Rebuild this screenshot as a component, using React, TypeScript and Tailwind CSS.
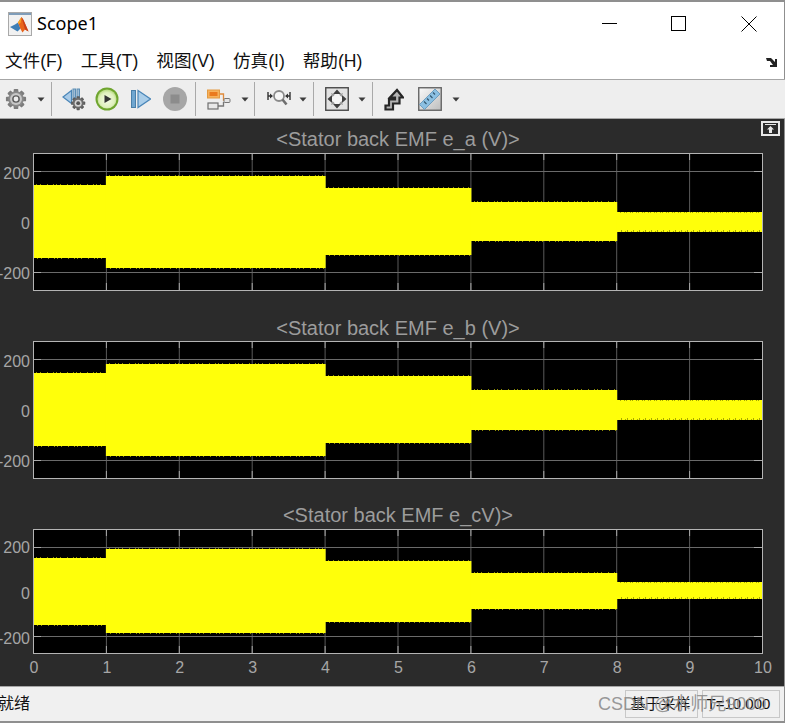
import React from "react";

const CJK = "font-['Liberation_Sans','Noto_Sans_CJK_SC',sans-serif]";

type Band = { from: number; to: number; top: number; bottom: number };

const WIDTH = 729;

// top and bottom of the yellow envelope are in px from the top of the axes
function Plot({ height, ticks, bands }: { height: number; ticks: number[]; bands: Band[] }) {
  const spikes: React.ReactElement[] = [];
  bands.forEach((b, i) => {
    const x0 = (b.from / 10) * WIDTH;
    const x1 = (b.to / 10) * WIDTH;
    const comb = b.from === 8;
    for (let x = Math.ceil(x0) + 3; x < x1 - 1; x += comb ? 2 + (x % 3) : 3 + ((x * 7 + i) % 5)) {
      const len = comb ? 1 + ((x * 5) % 3) : 1;
      const fill = comb ? "#a8a800" : "#8f8f00";
      spikes.push(<rect key={`t${i}-${x}`} x={x} y={b.top - (comb ? 0 : 1)} width="1" height="1" fill={fill} />);
      spikes.push(<rect key={`b${i}-${x}`} x={x + 1} y={b.bottom - (comb ? len : 0)} width="1" height={len} fill={fill} />);
    }
  });
  return (
    <svg width={WIDTH + 1} height={height + 1} className="block shrink-0">
      <rect x="0" y="0" width={WIDTH} height={height} fill="#000" />
      {[1, 2, 3, 4, 5, 6, 7, 8, 9].map((k) => (
        <g key={k}>
          <line x1={k * 72.9 + 0.5} x2={k * 72.9 + 0.5} y1="0" y2={height} stroke="#5a5a5a" />
          <line x1={k * 72.9 + 0.5} x2={k * 72.9 + 0.5} y1="0" y2="7" stroke="#a8a8a8" />
          <line x1={k * 72.9 + 0.5} x2={k * 72.9 + 0.5} y1={height - 7} y2={height} stroke="#a8a8a8" />
        </g>
      ))}
      {ticks.map((y) => (
        <g key={y}>
          <line x1="0" x2={WIDTH} y1={y + 0.5} y2={y + 0.5} stroke="#6a6a6a" />
          <line x1="0" x2="8" y1={y + 0.5} y2={y + 0.5} stroke="#a8a8a8" />
          <line x1={WIDTH - 8} x2={WIDTH} y1={y + 0.5} y2={y + 0.5} stroke="#a8a8a8" />
        </g>
      ))}
      {bands.map((b) => (
        <rect
          key={b.from}
          x={(b.from / 10) * WIDTH}
          y={b.top}
          width={((b.to - b.from) / 10) * WIDTH + 1}
          height={b.bottom - b.top}
          fill="#ffff0a"
        />
      ))}
      {spikes}
      <rect x="0.5" y="0.5" width={WIDTH} height={height} fill="none" stroke="#b4b4b4" />
    </svg>
  );
}

function YLabels({ gap, pad }: { gap: string; pad: string }) {
  return (
    <div className={`w-[33px] shrink-0 flex flex-col items-end pr-[3px] text-[16px] leading-[20px] text-[#a6a6a6] ${gap} ${pad}`}>
      <span>200</span>
      <span>0</span>
      <span className="whitespace-nowrap">-200</span>
    </div>
  );
}

function Caret() {
  return (
    <svg width="9" height="5" viewBox="0 0 9 5" className="shrink-0">
      <path d="M0.5 0.5h7l-3.5 4z" fill="#3c3c3c" />
    </svg>
  );
}

function Sep() {
  return <div className="w-px h-[34px] bg-[#a9a9a9] shrink-0" />;
}

const gearAngles = [0, 45, 90, 135, 180, 225, 270, 315];

function Gear() {
  return (
    <svg width="22" height="22" viewBox="0 0 24 24" className="shrink-0 blur-[0.3px]">
      {gearAngles.map((a) => (
        <rect key={a} x="9.5" y="1" width="5" height="5" rx="1" fill="#7c7c7c" transform={`rotate(${a} 12 12)`} />
      ))}
      <circle cx="12" cy="12" r="8.5" fill="#8a8a8a" />
      <circle cx="12" cy="12" r="6.5" fill="#c8c8c8" />
      <circle cx="12" cy="12" r="4.2" fill="#5e5e5e" />
      <circle cx="12" cy="12" r="2.6" fill="#eeeeee" />
    </svg>
  );
}

function MatlabIcon() {
  return (
    <svg width="24" height="24" viewBox="0 0 24 24" className="shrink-0">
      <rect x="0.5" y="0.5" width="23" height="23" fill="#f1f1f1" stroke="#a9a9a9" />
      <rect x="1" y="1" width="22" height="2" fill="#7f9db9" />
      <path d="M2 15l5-2.5 3-2 2.5 6-3 3z" fill="#3f7fb6" />
      <path d="M10 10.5l3.5-5.5 2 3 5 11.5-3.5-2-2.5 3-2-3.5z" fill="#e8641b" />
      <path d="M13.5 5l2 3 5 11.5-3.5-2z" fill="#c9401a" />
      <path d="M10 10.5l3.5-5.5-1 6-2 1z" fill="#f6a623" />
    </svg>
  );
}

function StepBack() {
  return (
    <svg width="24" height="24" viewBox="0 0 24 24" className="shrink-0 blur-[0.3px]">
      <path d="M1 10l8.500-6.500v13z" fill="#a9cbe8" stroke="#4a86b8" strokeWidth="1.2" />
      <rect x="11" y="2" width="2.5" height="11" fill="#9fbdd6" stroke="#5b8db4" />
      <rect x="15" y="2" width="2.5" height="11" fill="#9fbdd6" stroke="#5b8db4" />
      <g transform="translate(8.5 8.5) scale(0.64)">
        {gearAngles.map((a) => (
          <rect key={a} x="9.5" y="1" width="5" height="5" rx="1" fill="#5c5c5c" transform={`rotate(${a} 12 12)`} />
        ))}
        <circle cx="12" cy="12" r="8.5" fill="#6c6c6c" />
        <circle cx="12" cy="12" r="5.5" fill="#d4d4d4" />
        <circle cx="12" cy="12" r="3" fill="#555" />
      </g>
    </svg>
  );
}

function PlayIcon() {
  return (
    <svg width="24" height="24" viewBox="0 0 24 24" className="shrink-0 blur-[0.3px]">
      <defs>
        <radialGradient id="playFill" cx="0.5" cy="0.55" r="0.6">
          <stop offset="0" stopColor="#f6fbe9" />
          <stop offset="0.65" stopColor="#dff0bd" />
          <stop offset="1" stopColor="#a8d06a" />
        </radialGradient>
      </defs>
      <circle cx="12" cy="12" r="11.5" fill="#6fa52f" />
      <circle cx="12" cy="12" r="9.5" fill="url(#playFill)" />
      <path d="M9.500 8l7 4-7 4z" fill="#333" />
    </svg>
  );
}

function StepForward() {
  return (
    <svg width="20" height="20" viewBox="0 0 20 20" className="shrink-0 blur-[0.3px]">
      <rect x="0.5" y="1.5" width="4" height="17" fill="#6fa6d0" stroke="#4a7fa8" />
      <path d="M7 1.5l12.500 8.500-12.500 8.500z" fill="#a9cde9" stroke="#4a86b8" strokeWidth="1.2" />
    </svg>
  );
}

function StopIcon() {
  return (
    <svg width="24" height="24" viewBox="0 0 24 24" className="shrink-0 blur-[0.3px]">
      <circle cx="12" cy="12" r="12" fill="#a6a6a6" />
      <rect x="7.5" y="7.5" width="9" height="9" fill="#8c8c8c" />
    </svg>
  );
}

function HighlightIcon() {
  return (
    <svg width="24" height="24" viewBox="0 0 24 24" className="shrink-0 blur-[0.3px]">
      <path d="M12 7h4.500v6H18" stroke="#e08a3a" strokeWidth="1.3" fill="none" />
      <path d="M11 19h5.500v-4" stroke="#777" strokeWidth="1.3" fill="none" />
      <rect x="0.5" y="3" width="12" height="8" fill="#f6b25c" stroke="#e39a42" />
      <rect x="2.5" y="5" width="8" height="4" fill="#ea7a1e" />
      <rect x="17" y="11.500" width="6" height="4" rx="1" fill="#e4e4e4" stroke="#777" />
      <rect x="1" y="16" width="10" height="6" fill="#e8e8e8" stroke="#6f6f6f" strokeWidth="1.2" />
    </svg>
  );
}

function ZoomIcon() {
  return (
    <svg width="24" height="20" viewBox="0 0 24 20" className="shrink-0 blur-[0.3px]">
      <path d="M1 3v8M23 3v8M1 7h4M19 7h4" stroke="#333" strokeWidth="1.4" fill="none" />
      <path d="M3 4.500l3 2.500-3 2.500zM21 4.500l-3 2.500 3 2.500z" fill="#333" />
      <circle cx="12" cy="7" r="5" fill="#f6f6f6" stroke="#8a8a8a" strokeWidth="1.8" />
      <path d="M15.500 10.500l4 5" stroke="#6e6e6e" strokeWidth="2.6" />
    </svg>
  );
}

function FitIcon() {
  return (
    <svg width="24" height="24" viewBox="0 0 24 24" className="shrink-0 blur-[0.3px]">
      <rect x="0.750" y="0.750" width="22.5" height="22.5" fill="#e2e2e2" stroke="#4a4a4a" strokeWidth="1.4" />
      <circle cx="12" cy="12" r="7" fill="#f6f6f6" />
      <path d="M12 2.500l4 4.500H8zM12 21.500l4-4.500H8zM2.500 12L7 8v8zM21.500 12L17 8v8z" fill="#3f3f3f" />
      <path d="M6 6l4 1.500L7.500 10zM18 6l-4 1.500 2.500 2.500zM6 18l4-1.500L7.500 14zM18 18l-4-1.500 2.500-2.500z" fill="#9a9a9a" />
    </svg>
  );
}

function TriggerIcon() {
  return (
    <svg width="20" height="23" viewBox="0 0 20 23" className="shrink-0 blur-[0.3px]">
      <path d="M1.500 21.500H9V15.500h6.500V9.500H19L13 2 6 9.500h5v2H5v6H1.500z" fill="#b4b4b4" stroke="#262626" strokeWidth="2.200" />
    </svg>
  );
}

function RulerIcon() {
  return (
    <svg width="24" height="24" viewBox="0 0 24 24" className="shrink-0 blur-[0.3px]">
      <defs>
        <linearGradient id="rulerBg" x1="0" y1="0" x2="1" y2="1">
          <stop offset="0" stopColor="#fafafa" />
          <stop offset="1" stopColor="#bdbdbd" />
        </linearGradient>
      </defs>
      <rect x="0.750" y="0.750" width="22.5" height="22.5" fill="url(#rulerBg)" stroke="#666" strokeWidth="1.4" />
      <path d="M1.500 17.500L17 2l5 5L6.500 22.500z" fill="#8cc0e2" stroke="#5d92b8" strokeWidth="0.8" />
      <path d="M6 14.500l2.500 2.500M9 11.500l2 2M12 8.500l2.500 2.500M15 5.500l2 2" stroke="#33566f" strokeWidth="1.1" />
    </svg>
  );
}

const menus = ["文件(F)", "工具(T)", "视图(V)", "仿真(I)", "帮助(H)"];

const plotA: Band[] = [
  { from: 0, to: 1, top: 32, bottom: 105 },
  { from: 1, to: 4, top: 23, bottom: 115 },
  { from: 4, to: 6, top: 35, bottom: 102 },
  { from: 6, to: 8, top: 49, bottom: 88 },
  { from: 8, to: 10, top: 59, bottom: 79 },
];

const plotB: Band[] = [
  { from: 0, to: 1, top: 32, bottom: 105 },
  { from: 1, to: 4, top: 23, bottom: 115 },
  { from: 4, to: 6, top: 35, bottom: 102 },
  { from: 6, to: 8, top: 49, bottom: 89 },
  { from: 8, to: 10, top: 59, bottom: 79 },
];

const plotC: Band[] = [
  { from: 0, to: 1, top: 29, bottom: 96 },
  { from: 1, to: 4, top: 20, bottom: 104 },
  { from: 4, to: 6, top: 32, bottom: 93 },
  { from: 6, to: 8, top: 44, bottom: 80 },
  { from: 8, to: 10, top: 53, bottom: 70 },
];

export default function App() {
  return (
    <div className={`w-[785px] h-[723px] bg-white flex flex-col overflow-hidden relative ${CJK}`}>
      {/* Title bar */}
      <div className="h-[41px] shrink-0 border-t-2 border-[#8f8f8f] border-r border-r-[#8f8f8f] flex items-center pl-2 pr-[27px] pt-[4px]">
        <MatlabIcon />
        <span className="ml-[5px] text-[18px] text-black font-['Noto_Sans',sans-serif]">Scope1</span>
        <div className="ml-auto flex items-center gap-[54px]">
          <div className="w-[15px] h-px bg-black" />
          <div className="w-[15px] h-[15px] border border-black" />
          <svg width="16" height="16" viewBox="0 0 16 16" className="ml-px">
            <path d="M0.5 0.5l15 15M15.5 0.5l-15 15" stroke="#000" fill="none" />
          </svg>
        </div>
      </div>

      {/* Menu bar */}
      <div className="h-[38px] shrink-0 flex items-center pl-[5px] pr-[6px] pt-[3px] border-r border-[#8f8f8f] text-[17.6px] text-[#111]">
        <div className="flex gap-[18px]">
          {menus.map((m) => (
            <span key={m}>{m}</span>
          ))}
        </div>
        <svg width="13" height="12" viewBox="0 0 13 12" className="ml-auto">
          <path d="M1 2h5l1 1 3 3V3h2v8H5V9h3L5 5H2z" fill="#222" />
        </svg>
      </div>

      {/* Toolbar */}
      <div className="h-[40px] shrink-0 bg-[#eeeeee] border-y border-[#a6a6a6] flex items-center pl-[5px]">
        <Gear />
        <div className="ml-[10px]"><Caret /></div>
        <div className="ml-[5px]"><Sep /></div>
        <div className="ml-[10px]"><StepBack /></div>
        <div className="ml-[9px]"><PlayIcon /></div>
        <div className="ml-[12px]"><StepForward /></div>
        <div className="ml-[12px]"><StopIcon /></div>
        <div className="ml-[8px]"><Sep /></div>
        <div className="ml-[11px]"><HighlightIcon /></div>
        <div className="ml-[10px]"><Caret /></div>
        <div className="ml-[4px]"><Sep /></div>
        <div className="ml-[12px]"><ZoomIcon /></div>
        <div className="ml-[8px]"><Caret /></div>
        <div className="ml-[5px]"><Sep /></div>
        <div className="ml-[11px]"><FitIcon /></div>
        <div className="ml-[9px]"><Caret /></div>
        <div className="ml-[5px]"><Sep /></div>
        <div className="ml-[11px]"><TriggerIcon /></div>
        <div className="ml-[14px]"><RulerIcon /></div>
        <div className="ml-[10px]"><Caret /></div>
      </div>

      {/* Scope area */}
      <div className="flex-1 bg-[#2b2b2b] flex flex-col relative font-['Liberation_Sans',sans-serif] border-r border-[#8f8f8f]">
        <div className="absolute top-[2px] right-[4px] w-[19px] h-[15px] border-2 border-[#e8e8e8] flex items-center justify-center">
          <svg width="11" height="9" viewBox="0 0 11 9">
            <path d="M0 0.5h11" stroke="#e8e8e8" />
            <path d="M5.500 2L9 5.500H7V9H4V5.500H2z" fill="#e8e8e8" />
          </svg>
        </div>

        <div className="h-[34px] pt-[9px] text-center text-[20px] leading-[22px] text-[#9c9c9c] pl-[12px]">&lt;Stator back EMF e_a (V)&gt;</div>
        <div className="flex">
          <YLabels gap="gap-[30px]" pad="pt-[11px]" />
          <Plot height={137} ticks={[18, 69, 119]} bands={plotA} />
        </div>

        <div className="h-[50px] pt-[26px] text-center text-[20px] leading-[22px] text-[#9c9c9c] pl-[12px]">&lt;Stator back EMF e_b (V)&gt;</div>
        <div className="flex">
          <YLabels gap="gap-[30px]" pad="pt-[11px]" />
          <Plot height={137} ticks={[18, 69, 119]} bands={plotB} />
        </div>

        <div className="h-[50px] pt-[25px] text-center text-[20px] leading-[22px] text-[#9c9c9c] pl-[12px]">&lt;Stator back EMF e_cV)&gt;</div>
        <div className="flex">
          <YLabels gap="gap-[25.5px]" pad="pt-[9px]" />
          <Plot height={124} ticks={[18, 63, 107]} bands={plotC} />
        </div>

        <div className="ml-[34px] w-[729px] flex justify-between mt-[4px] text-[16px] leading-[20px] text-[#a6a6a6]">
          {[0, 1, 2, 3, 4, 5, 6, 7, 8, 9, 10].map((n) => (
            <span key={n} className="w-0 flex justify-center">{n}</span>
          ))}
        </div>
      </div>

      {/* Status bar */}
      <div className="h-[37px] shrink-0 bg-[#f0f0f0] border-t border-[#a6a6a6] border-b-2 border-b-[#8f8f8f] border-r border-r-[#8f8f8f] flex items-center text-[15px] text-[#111] overflow-hidden">
        <span className="-ml-[2px] text-[16px]">就绪</span>
        <div className="ml-auto flex gap-[4px] pr-[4px]">
          <div className="w-[73px] h-[28px] border border-[#c8c8c8] flex items-center justify-center pr-[2px]">基于采样</div>
          <div className="w-[78px] h-[28px] border border-[#c8c8c8] flex items-center justify-center pr-[5px]">T=10.000</div>
        </div>
      </div>

      {/* Watermark */}
      <div className="absolute left-[598px] top-[692px] text-[18px] leading-[24px] text-[#8c8c8c]/90 whitespace-nowrap">CSDN @水师兄9000</div>
    </div>
  );
}
